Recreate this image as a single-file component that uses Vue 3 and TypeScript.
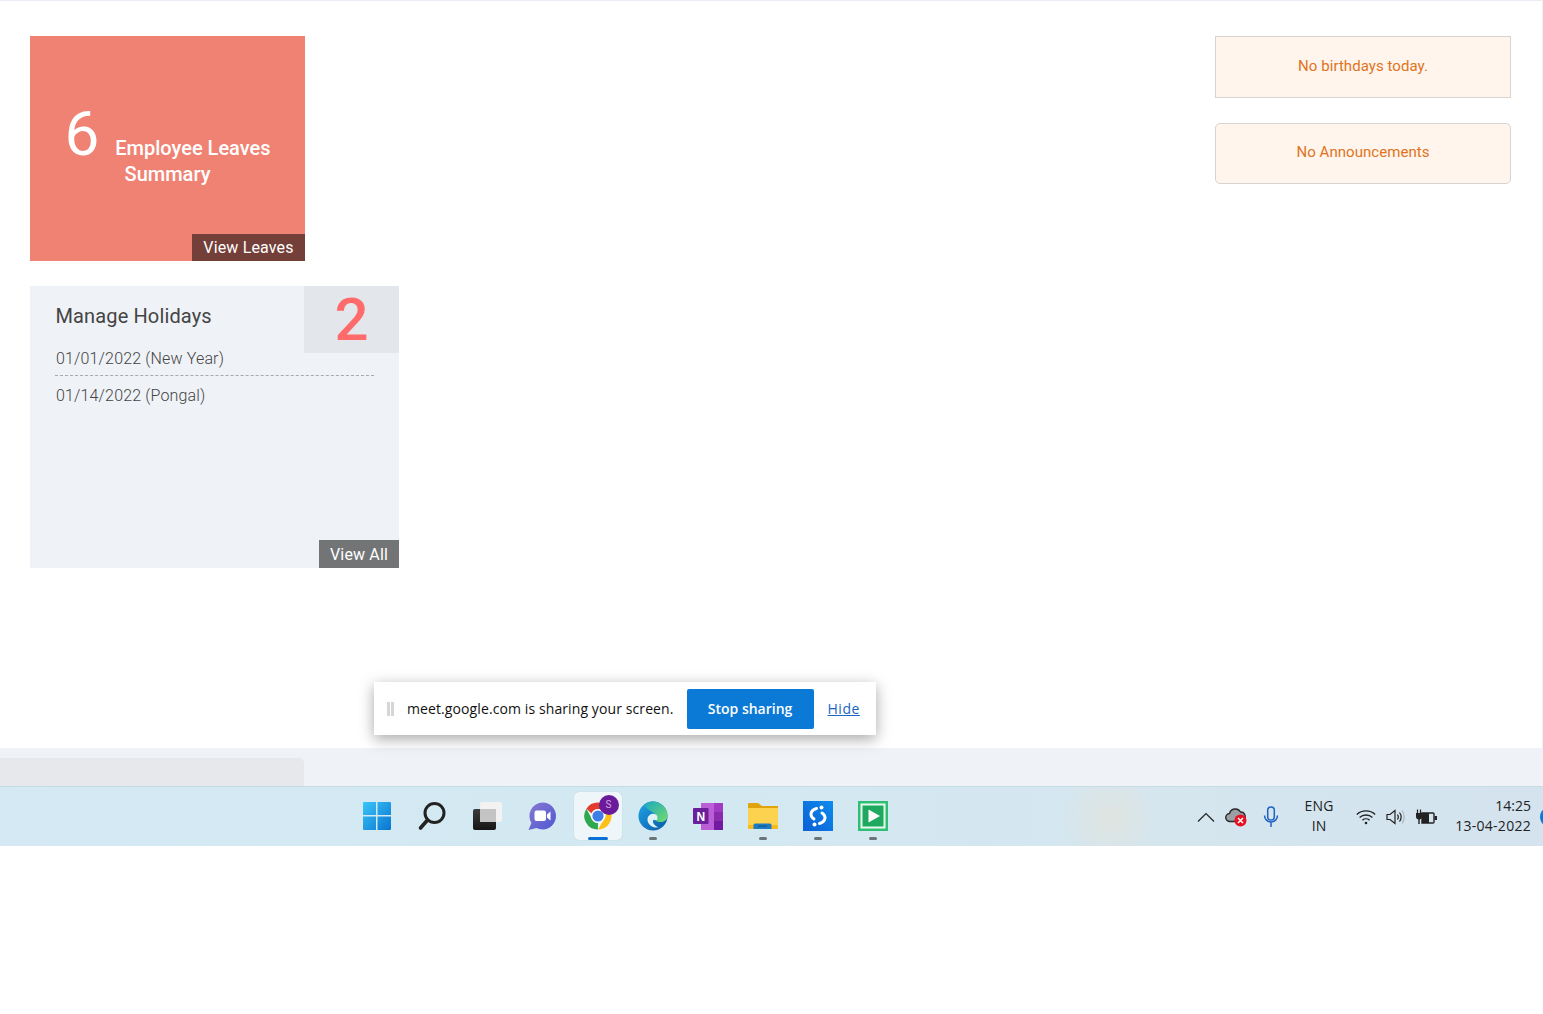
<template>
  <div class="screen">
    <main class="page">
      <div class="left-col">
        <section class="leave-card">
          <p class="leave-text"><span class="leave-count">{{ leaveCount }}</span> Employee Leaves Summary</p>
          <a class="leave-link">View Leaves</a>
        </section>

        <section class="holiday-card">
          <div class="holiday-count">{{ holidays.length }}</div>
          <h2 class="holiday-title">Manage Holidays</h2>
          <ul class="holiday-list">
            <li v-for="h in holidays" :key="h">{{ h }}</li>
          </ul>
          <a class="holiday-link">View All</a>
        </section>
      </div>

      <aside class="right-col">
        <div class="notice">No birthdays today.</div>
        <div class="notice notice-round">No Announcements</div>
      </aside>

      <div class="share-bar">
        <span class="grip"></span>
        <span class="share-text">meet.google.com is sharing your screen.</span>
        <button class="stop-btn" type="button">Stop sharing</button>
        <a class="hide-link">Hide</a>
      </div>
    </main>

    <div class="tab-strip"><div class="tab"></div></div>

    <footer class="taskbar">
      <div class="apps">
        <div class="app">
          <svg width="30" height="30" viewBox="0 0 30 30">
            <defs>
              <linearGradient id="win" x1="0" y1="0" x2="1" y2="1">
                <stop offset="0" stop-color="#39c6fa" /><stop offset="1" stop-color="#0a74d0" />
              </linearGradient>
            </defs>
            <path fill="url(#win)" d="M1 2a1 1 0 0 1 1-1h12v13H1zM15.500 1H28a1 1 0 0 1 1 1v12H15.500zM1 15.500h13V29H2a1 1 0 0 1-1-1zM15.500 15.500H29V28a1 1 0 0 1-1 1H15.500z" />
          </svg>
        </div>
        <div class="app">
          <svg width="30" height="30" viewBox="0 0 30 30" fill="none" stroke="#222" stroke-linecap="round">
            <circle cx="17.500" cy="12" r="9.500" stroke-width="3" />
            <path d="M10.500 19 3.500 27" stroke-width="3.600" />
          </svg>
        </div>
        <div class="app">
          <svg width="32" height="30" viewBox="0 0 32 30">
            <defs>
              <linearGradient id="taskDark" x1="0" y1="0" x2="0" y2="1">
                <stop offset="0" stop-color="#3c3c3c" /><stop offset="1" stop-color="#161616" />
              </linearGradient>
            </defs>
            <rect x="2" y="8" width="23" height="21" rx="2" fill="url(#taskDark)" />
            <rect x="9" y="1" width="22" height="20" rx="2" fill="#f2f2f2" />
            <rect x="9" y="8" width="16" height="13" fill="#c4c4c4" />
          </svg>
        </div>
        <div class="app">
          <svg width="30" height="30" viewBox="0 0 30 30">
            <defs>
              <linearGradient id="chat" x1="0" y1="0" x2="1" y2="1">
                <stop offset="0" stop-color="#8a78d0" /><stop offset="1" stop-color="#4d58d2" />
              </linearGradient>
            </defs>
            <path fill="url(#chat)" d="M15.500 1.500a13.500 13.500 0 1 1-6 25.600L1.500 29l2.900-7A13.500 13.500 0 0 1 15.500 1.500z" />
            <rect x="7.500" y="9.500" width="11.500" height="10.500" rx="2" fill="#fff" />
            <path fill="#fff" d="m20 13.500 3.500-3v9l-3.500-3z" />
          </svg>
        </div>
        <div class="app app-active">
          <svg width="30" height="30" viewBox="0 0 30 30">
            <path fill="#e33b2e" d="M15 1.500a13.500 13.500 0 0 1 11.700 6.750H15a6.750 6.750 0 0 0-6.300 4.300L3.400 7.700A13.500 13.500 0 0 1 15 1.500z" />
            <path fill="#fbc116" d="M26.700 8.250A13.500 13.500 0 0 1 15 28.500l5.800-10.100a6.750 6.750 0 0 0 0-10.150z" />
            <path fill="#2fa84f" d="M3.400 7.700 9.200 18.400a6.750 6.750 0 0 0 5.800 3.350l-.1 6.750A13.500 13.500 0 0 1 3.400 7.700z" />
            <circle cx="15" cy="15" r="7" fill="#fff" />
            <circle cx="15" cy="15" r="5.600" fill="#3f7de8" />
          </svg>
          <span class="chrome-badge">S</span>
          <span class="run-bar"></span>
        </div>
        <div class="app app-open">
          <svg width="30" height="30" viewBox="0 0 30 30">
            <defs>
              <linearGradient id="edgeA" x1="0" y1="0" x2="1" y2="1">
                <stop offset="0" stop-color="#1fa6e6" /><stop offset="1" stop-color="#0b58a6" />
              </linearGradient>
              <linearGradient id="edgeB" x1="0" y1="0" x2="1" y2="1">
                <stop offset="0" stop-color="#1aa7c4" /><stop offset="1" stop-color="#72dd68" />
              </linearGradient>
            </defs>
            <circle cx="15" cy="15" r="14.500" fill="url(#edgeA)" />
            <path fill="url(#edgeB)" d="M6 3.600A14.500 14.500 0 0 1 29.500 15c0 3.500-3 6-6.500 6-2.500 0-4-.5-5-1.500 1.500-1.500 1.500-3.500.5-5C16 10.500 9 10 6 3.600z" />
            <path fill="#dff3f7" d="M18 13.500c-3.500-2-8 0-8.500 4.500-.3 4 3 8 8 8.500l3-.3c-3-1-6-3.500-5.500-6.500.3-1 1-1 1.500-.7 1 .5 2 .5 2.500-.3 1-1.500.5-4-1-5.200z" />
          </svg>
        </div>
        <div class="app">
          <svg width="30" height="30" viewBox="0 0 30 30">
            <path fill="#ba5fd8" d="M8 2h22v27H8z" />
            <path fill="#a23bc4" d="M21 2h9v9h-9z" />
            <path fill="#8a2bae" d="M21 11h9v9h-9z" />
            <path fill="#7119a0" d="M21 20h9v9h-9z" />
            <rect y="7" width="15.500" height="16" rx="1" fill="#6c1f9a" />
            <text x="7.800" y="19.500" class="note-letter">N</text>
          </svg>
        </div>
        <div class="app app-open">
          <svg width="32" height="30" viewBox="0 0 32 30">
            <path fill="#dfa30e" d="M1 3a1 1 0 0 1 1-1h9l4 3h16v6H1z" />
            <path fill="#fdd24f" d="M1 7h30v20a1 1 0 0 1-1 1H2a1 1 0 0 1-1-1z" />
            <path fill="#f7bb1e" d="M1 24h30v3a1 1 0 0 1-1 1H2a1 1 0 0 1-1-1z" />
            <path fill="#1b7cc4" d="M6.500 28v-4a1.500 1.500 0 0 1 1.500-1.500h15a1.500 1.500 0 0 1 1.500 1.500v4z" />
            <path fill="#0d5a99" d="M11 24.500h9v1.300h-9z" />
          </svg>
        </div>
        <div class="app app-open">
          <svg width="30" height="30" viewBox="0 0 30 30">
            <defs>
              <linearGradient id="blueS" x1="0" y1="1" x2="1" y2="0">
                <stop offset="0" stop-color="#0d5fd6" /><stop offset="1" stop-color="#0c8cec" />
              </linearGradient>
            </defs>
            <rect width="30" height="30" fill="url(#blueS)" />
            <g fill="none" stroke="#fff" stroke-width="3" stroke-linecap="round">
              <path d="M13.500 7.500c-3.500 1-5.500 3.500-5.500 6 0 2 1 3.200 3 4.500" />
              <path d="M16.500 22.500c3.500-1 5.500-3.500 5.500-6 0-2-1-3.200-3-4.500" />
            </g>
            <circle cx="18.500" cy="6.500" r="2" fill="#fff" />
            <circle cx="11.500" cy="23.500" r="2" fill="#fff" />
          </svg>
        </div>
        <div class="app app-open">
          <svg width="30" height="30" viewBox="0 0 30 30">
            <rect width="30" height="30" fill="#2fbf74" />
            <rect x="2.500" y="2.500" width="25" height="25" fill="#e9f8ef" />
            <rect x="4.500" y="4.500" width="21" height="21" fill="#1ea95f" />
            <path fill="#fff" d="M10.500 8.500 22 15l-11.500 6.500z" />
          </svg>
        </div>
      </div>

      <div class="tray">
        <svg class="tray-chevron" width="18" height="10" viewBox="0 0 18 10" fill="none" stroke="#222" stroke-width="1.200">
          <path d="M1 9.500 9 1.500l8 8" />
        </svg>
        <svg class="tray-cloud" width="22" height="20" viewBox="0 0 22 20">
          <path fill="#9aa0a4" stroke="#2a2a2a" stroke-width="1.400" d="M5 14.500a4 4 0 0 1-.5-8 6 6 0 0 1 11-1.500 4.500 4.500 0 0 1 3 8l-1 1.500z" />
          <circle cx="15.500" cy="13.500" r="6" fill="#e81123" />
          <path stroke="#fff" stroke-width="1.500" d="m13 11 5 5m0-5-5 5" />
        </svg>
        <svg class="tray-mic" width="16" height="22" viewBox="0 0 16 22" fill="none" stroke="#1f62c4" stroke-width="1.500">
          <rect x="4.700" y="1" width="6.600" height="13" rx="3.300" />
          <path d="M1.500 9.500a6.500 6.500 0 0 0 13 0M8 16v5" />
        </svg>
        <div class="tray-lang">ENG<br />IN</div>
        <svg class="tray-wifi" width="20" height="16" viewBox="0 0 20 16" fill="none" stroke="#222" stroke-width="1.300">
          <path d="M.8 5.500c5-4.800 13.400-4.800 18.400 0M3.600 8.400c3.500-3.200 9.300-3.200 12.800 0M6.400 11.200c2-1.700 5.200-1.700 7.200 0" />
          <circle cx="10" cy="14" r="1.300" fill="#222" stroke="none" />
        </svg>
        <svg class="tray-vol" width="20" height="18" viewBox="0 0 20 18" fill="none" stroke="#222" stroke-width="1.200">
          <path d="M1 6.500h3L9 2.500v13l-5-4H1z" />
          <path d="M11.500 6.500c1 1.500 1 3.500 0 5M13.500 4.500c2 2.700 2 6.300 0 9" />
          <path stroke="#a9b4ba" d="M16 2.500c3 3.800 3 9.200 0 13" />
        </svg>
        <svg class="tray-batt" width="22" height="18" viewBox="0 0 22 18">
          <path fill="none" stroke="#222" stroke-width="1.400" d="M7 5h11a1 1 0 0 1 1 1v8a1 1 0 0 1-1 1H7z" />
          <path fill="#222" d="M7 5h7v10H7zM19.500 8H22v4h-2.500zM1 5h6v4a2.500 2.500 0 0 1-2.300 2.400V16H3.300v-4.600A2.500 2.500 0 0 1 1 9z" />
          <path stroke="#222" stroke-width="1.200" d="M2.500 1.500V5M5.500 1.500V5" />
        </svg>
        <div class="tray-clock">14:25<br /><span class="tray-date">13-04-2022</span></div>
        <span class="tray-dot"></span>
      </div>
    </footer>
  </div>
</template>

<script setup lang="ts">
const leaveCount = 6
const holidays: string[] = ['01/01/2022 (New Year)', '01/14/2022 (Pongal)']
</script>

<style>
html, body { margin: 0; background: #fff; }
</style>

<style scoped>
.screen { width: 1543px; height: 1014px; overflow: hidden; font-family: Roboto, sans-serif; background: #fff; }
.page {
  position: relative; box-sizing: border-box; height: 748px;
  display: flex; justify-content: space-between; padding: 35px 31px 0 30px;
  border-top: 1px solid #e9edf3; border-right: 1px solid #eef1f5;
}
.left-col { display: flex; flex-direction: column; align-items: flex-start; gap: 25px; }

.leave-card {
  position: relative; box-sizing: border-box; width: 275px; height: 225px;
  background: #f08273; color: #fff; text-align: center; padding: 85px 30px 0;
}
.leave-text { margin: 0; font-size: 20px; font-weight: 500; line-height: 26px; }
.leave-count { font-size: 62px; font-weight: 400; line-height: 26px; margin-right: 11px; }
.leave-link {
  position: absolute; right: 0; bottom: 0; width: 113px; height: 27px;
  background: #733f38; color: #fff; font-size: 16px; line-height: 27px; text-align: center; letter-spacing: .15px;
}

.holiday-card {
  position: relative; box-sizing: border-box; width: 369px; height: 282px;
  background: #eff2f7; padding: 17px 25px 0 25px; color: #444;
}
.holiday-count {
  position: absolute; top: 0; right: 0; width: 95px; height: 67px;
  background: #e3e6ea; color: #ff6b6b; font-size: 60px; font-weight: 500; line-height: 68px; text-align: center;
}
.holiday-title { margin: 0; padding-left: .5px; font-size: 20px; font-weight: 400; line-height: 26px; letter-spacing: .13px; }
.holiday-list { list-style: none; margin: 18px 0 0; padding: 0; font-size: 16px; font-weight: 300; letter-spacing: .15px; }
.holiday-list li { height: 24px; line-height: 24px; padding: 0 0 4px 1px; }
.holiday-list li + li { border-top: 1px dashed #a9a9a9; padding-top: 8px; }
.holiday-link {
  position: absolute; right: 0; bottom: 0; width: 80px; height: 28px;
  background: #737476; color: #fff; font-size: 16px; line-height: 29px; text-align: center; letter-spacing: .15px;
}

.right-col { display: flex; flex-direction: column; gap: 25px; width: 296px; }
.notice {
  box-sizing: border-box; height: 62px; background: #fff5ec; border: 1px solid #d8d3cf;
  color: #e0731d; font-size: 15px; line-height: 58px; text-align: center; letter-spacing: .05px;
}
.notice-round { height: 61px; border-radius: 5px; line-height: 57px; }

.share-bar {
  position: absolute; left: 374px; top: 681px; box-sizing: border-box; width: 502px; height: 53px;
  display: flex; align-items: center; background: #fff; padding-left: 13px;
  box-shadow: 0 4px 14px rgba(0, 0, 0, .35); font-family: "Open Sans", sans-serif;
}
.grip { width: 7px; height: 14px; border-left: 3px solid #d6d6d6; border-right: 3px solid #d6d6d6; box-sizing: border-box; }
.share-text { margin-left: 13px; font-size: 14px; color: #111; white-space: nowrap; letter-spacing: .1px; }
.stop-btn {
  margin-left: 13px; width: 127px; height: 40px; border: 0; border-radius: 2px;
  background: #0b7ad6; color: #fff; font: 600 14px "Open Sans", sans-serif; padding: 0;
}
.hide-link { margin-left: 14px; font-size: 14px; color: #1a66c2; text-decoration: underline; letter-spacing: .5px; }

.tab-strip { height: 38px; background: #eff2f6; display: flex; align-items: flex-end; }
.tab { width: 304px; height: 28px; background: #e7e8ec; border-top-right-radius: 5px; }

.taskbar {
  height: 60px; box-sizing: border-box; display: flex; align-items: flex-start; padding-left: 353px;
  border-top: 1px solid #c5dbe6; position: relative;
  background: radial-gradient(circle 50px at 1110px 30px, #dfe4e0 0, rgba(223, 228, 224, 0) 100%), linear-gradient(90deg, #d4e9f3 0, #d3e9f2 45%, #d5e6ef 75%, #d4e3ee 100%);
}
.apps { display: flex; gap: 7.15px; padding-top: 5px; }
.app { position: relative; width: 48px; height: 48px; display: flex; align-items: center; justify-content: center; box-sizing: border-box; }
.app-active { background: #eef6fa; border-radius: 5px; box-shadow: 0 0 1px rgba(0, 0, 0, .2); }
.app-open::after {
  content: ""; position: absolute; bottom: 0; left: 20px; width: 8px; height: 3px;
  border-radius: 2px; background: #6d7479;
}
.run-bar { position: absolute; bottom: 0; left: 14px; width: 20px; height: 3px; border-radius: 2px; background: #0a6fd6; }
.chrome-badge {
  position: absolute; top: 3px; right: 3px; width: 20px; height: 20px; border-radius: 50%;
  background: #6a1b9a; color: #d9a5e0; font-size: 10px; line-height: 20px; text-align: center;
}
.note-letter { font: 700 12px "Liberation Sans", sans-serif; fill: #fff; text-anchor: middle; }

.tray {
  position: absolute; left: 0; top: 0; right: 0; height: 59px; pointer-events: none;
  display: flex; align-items: center; justify-content: flex-end;
  font-family: "Open Sans", sans-serif; font-size: 14px; color: #222;
}
.tray-chevron { margin-right: 10px; }
.tray-cloud { margin-right: 16px; }
.tray-mic { margin-right: 20px; }
.tray-lang { width: 40px; text-align: center; line-height: 20px; margin: -2px 17px 0 0; letter-spacing: .2px; }
.tray-wifi { margin-right: 10px; }
.tray-vol { margin-right: 9px; }
.tray-batt { margin-right: 18px; }
.tray-clock { text-align: right; line-height: 20px; white-space: nowrap; margin-top: -2px; }
.tray-date { letter-spacing: .28px; }
.tray-dot { width: 12px; height: 16px; margin: 0 -9px 0 9px; background: #0a7ad6; border-radius: 50%; flex: none; }
</style>
